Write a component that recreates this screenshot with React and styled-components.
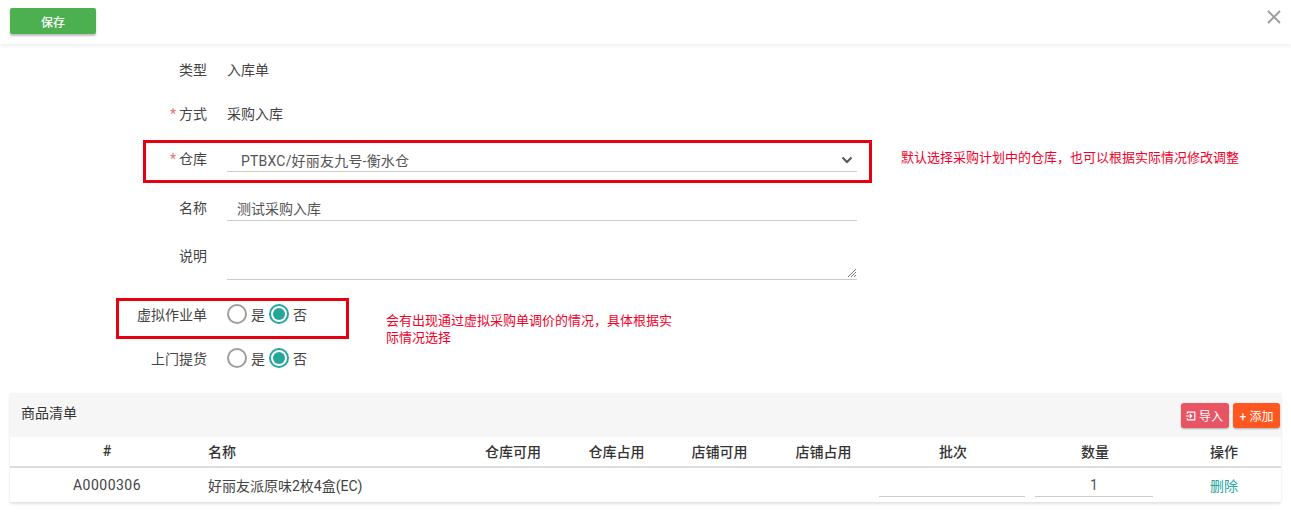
import React from 'react'
import styled, { createGlobalStyle } from 'styled-components'

const GlobalStyle = createGlobalStyle`
  html, body {
    margin: 0;
    padding: 0;
    background: #fff;
    font-family: Roboto, "Noto Sans CJK SC", sans-serif;
    font-size: 14px;
    color: #333;
  }
  * {
    box-sizing: border-box;
  }
`

const Page = styled.div`
  position: relative;
  width: 1291px;
  height: 529px;
  overflow: hidden;
`

const TopBar = styled.div`
  height: 44px;
  padding: 8px 10px;
  display: flex;
  justify-content: space-between;
  align-items: flex-start;
  box-shadow: 0 2px 4px rgba(0, 0, 0, 0.07);
`

const SaveButton = styled.button`
  width: 86px;
  height: 26px;
  padding: 0;
  border: 0;
  border-radius: 2px;
  background: #4caf50;
  color: #fff;
  font: 500 12px Roboto, "Noto Sans CJK SC", sans-serif;
  box-shadow: 0 2px 2px rgba(0, 0, 0, 0.25);
`

const CloseIcon = styled.svg`
  width: 14px;
  height: 14px;
  margin: 2px 0 0;
`

const Form = styled.div`
  padding-top: 3px;
`

const Row = styled.div`
  height: ${p => p.$height || 44}px;
  margin-top: ${p => p.$top || 0}px;
  display: grid;
  grid-template-columns: 207px 630px;
  column-gap: 20px;
  align-items: ${p => (p.$start ? 'start' : 'center')};
`

const Label = styled.label`
  text-align: right;
  font-size: 14px;
  color: #444;
  white-space: nowrap;
  padding-top: ${p => p.$pad || 0}px;
  ${p => p.$required && `
    &::before {
      content: '*';
      color: #e57373;
      margin-right: 3px;
    }
  `}
`

const Value = styled.div`
  font-size: 14px;
  color: #444;
`

const SelectBox = styled.div`
  height: 34px;
  margin-top: 3px;
  padding: 11px 4px 0 14px;
  display: flex;
  align-items: center;
  justify-content: space-between;
  border-bottom: 1px solid #ccc;
  font-size: 14px;
  letter-spacing: 0.2px;
  color: #555;
`

const TextLine = styled.div`
  height: 37px;
  padding: 15px 0 0 10px;
  border-bottom: 1px solid #ccc;
  font-size: 14px;
  color: #555;
  line-height: 20px;
`

const TextArea = styled.div`
  position: relative;
  height: 40px;
  border-bottom: 1px solid #ccc;
`

const Grip = styled.svg`
  position: absolute;
  right: 0;
  bottom: 1px;
  width: 10px;
  height: 10px;
`

const RadioGroup = styled.div`
  display: flex;
  align-items: center;
`

const RadioItem = styled.span`
  display: inline-flex;
  align-items: center;
  gap: 4px;
  margin-right: 4px;
  font-size: 14px;
  color: #444;
`

const RadioDot = styled.span`
  position: relative;
  width: 20px;
  height: 20px;
  border-radius: 50%;
  border: 2px solid ${p => (p.$checked ? '#26a69a' : '#9e9e9e')};
  ${p => p.$checked && `
    &::after {
      content: '';
      position: absolute;
      inset: 2px;
      border-radius: 50%;
      background: #26a69a;
    }
  `}
`

const RedBox = styled.div`
  position: absolute;
  left: ${p => p.$x}px;
  top: ${p => p.$y}px;
  width: ${p => p.$w}px;
  height: ${p => p.$h}px;
  border: 3px solid #e60012;
  pointer-events: none;
`

const Note = styled.div`
  position: absolute;
  left: ${p => p.$x}px;
  top: ${p => p.$y}px;
  width: ${p => p.$w}px;
  color: #f0002a;
  font-size: 13px;
  line-height: 17px;
`

const Section = styled.div`
  margin: 13px 10px 0;
  width: 1271px;
  border-radius: 2px;
  box-shadow: 0 2px 3px rgba(0, 0, 0, 0.12);
`

const SectionHead = styled.div`
  height: 44px;
  padding: 10px 1px 0 11px;
  display: flex;
  justify-content: space-between;
  align-items: flex-start;
  background: #f6f6f6;
  font-size: 14px;
  line-height: 20px;
  color: #333;
`

const Actions = styled.div`
  display: flex;
  gap: 4px;
`

const ActionButton = styled.button`
  height: 25px;
  width: ${p => p.$w}px;
  padding: 0 ${p => p.$shift || 0}px 0 0;
  border: 0;
  border-radius: 3px;
  display: inline-flex;
  align-items: center;
  justify-content: center;
  gap: 3px;
  background: ${p => p.$bg};
  color: #fff;
  font: 12px Roboto, "Noto Sans CJK SC", sans-serif;
  box-shadow: 0 1px 2px rgba(0, 0, 0, 0.3);
`

const GridRow = styled.div`
  display: grid;
  grid-template-columns: 194px 257px 104px 103px 103px 105px 154px 130px 1fr;
  align-items: center;
  height: ${p => p.$height}px;
  padding-bottom: ${p => (p.$head ? 2 : 1)}px;
  border-bottom: ${p => (p.$head ? '2px solid #ddd' : '0')};
`

const Cell = styled.div`
  text-align: ${p => p.$align || 'center'};
  padding-left: ${p => p.$pad || 0}px;
  font-size: 14px;
  font-weight: ${p => (p.$head ? 500 : 400)};
  color: ${p => (p.$head ? '#333' : '#444')};
  letter-spacing: ${p => (p.$code ? '0.5px' : 0)};
  white-space: nowrap;
`

const CellInput = styled.div`
  height: 24px;
  margin: 0 ${p => p.$right}px 0 ${p => p.$left}px;
  border-bottom: 1px solid #ccc;
  text-align: center;
  line-height: 24px;
  font-size: 14px;
  color: #555;
`

const DeleteLink = styled.a`
  color: #26a69a;
  font-size: 14px;
`

const Radios = () => (
  <RadioGroup>
    <RadioItem><RadioDot />是</RadioItem>
    <RadioItem><RadioDot $checked />否</RadioItem>
  </RadioGroup>
)

const columns = ['#', '名称', '仓库可用', '仓库占用', '店铺可用', '店铺占用', '批次', '数量', '操作']

export default function App() {
  return (
    <Page>
      <GlobalStyle />
      <TopBar>
        <SaveButton>保存</SaveButton>
        <CloseIcon viewBox="0 0 14 14">
          <path d="M1 1 L13 13 M13 1 L1 13" stroke="#999" strokeWidth="1.8" fill="none" />
        </CloseIcon>
      </TopBar>
      <Form>
        <Row>
          <Label>类型</Label>
          <Value>入库单</Value>
        </Row>
        <Row>
          <Label $required>方式</Label>
          <Value>采购入库</Value>
        </Row>
        <Row $start>
          <Label $required $pad={13}>仓库</Label>
          <SelectBox>
            PTBXC/好丽友九号-衡水仓
            <svg width="12" height="8" viewBox="0 0 12 8">
              <path d="M1.5 1.5 L6 6 L10.5 1.5" stroke="#555" strokeWidth="2" fill="none" />
            </svg>
          </SelectBox>
        </Row>
        <Row $start $top={5}>
          <Label $pad={13}>名称</Label>
          <TextLine>测试采购入库</TextLine>
        </Row>
        <Row $start $height={40} $top={12}>
          <Label $pad={5}>说明</Label>
          <TextArea>
            <Grip viewBox="0 0 10 10">
              <path d="M1 9 L9 1 M4 9 L9 4 M7 9 L9 7" stroke="#777" strokeWidth="1" fill="none" />
            </Grip>
          </TextArea>
        </Row>
        <Row $top={12}>
          <Label>虚拟作业单</Label>
          <Radios />
        </Row>
        <Row>
          <Label>上门提货</Label>
          <Radios />
        </Row>
      </Form>

      <Section>
        <SectionHead>
          商品清单
          <Actions>
            <ActionButton $w={48} $shift={2} $bg="#e95464">
              <svg width="11" height="10" viewBox="0 0 14 12">
                <path d="M3 3 V1 H12.5 V11 H3 V9 M1 6 H8 M6 3.5 L8.5 6 L6 8.5" stroke="#fff" strokeWidth="1.5" fill="none" />
              </svg>
              导入
            </ActionButton>
            <ActionButton $w={47} $bg="#ff5722">+ 添加</ActionButton>
          </Actions>
        </SectionHead>
        <GridRow $head $height={31}>
          {columns.map((c, i) => (
            <Cell key={c} $head $align={i === 1 ? 'left' : 'center'} $pad={i === 1 ? 4 : i === 8 ? 7 : 0}>{c}</Cell>
          ))}
        </GridRow>
        <GridRow $height={34}>
          <Cell $code>A0000306</Cell>
          <Cell $align="left" $pad={4}>好丽友派原味2枚4盒(EC)</Cell>
          <Cell />
          <Cell />
          <Cell />
          <Cell />
          <CellInput $left={3} $right={5} />
          <CellInput $left={5} $right={7}>1</CellInput>
          <Cell $pad={7}><DeleteLink>删除</DeleteLink></Cell>
        </GridRow>
      </Section>

      <RedBox $x={143} $y={140} $w={729} $h={43} />
      <RedBox $x={116} $y={298} $w={233} $h={41} />
      <Note $x={901} $y={149} $w={360}>默认选择采购计划中的仓库，也可以根据实际情况修改调整</Note>
      <Note $x={386} $y={312} $w={290}>会有出现通过虚拟采购单调价的情况，具体根据实际情况选择</Note>
    </Page>
  )
}
